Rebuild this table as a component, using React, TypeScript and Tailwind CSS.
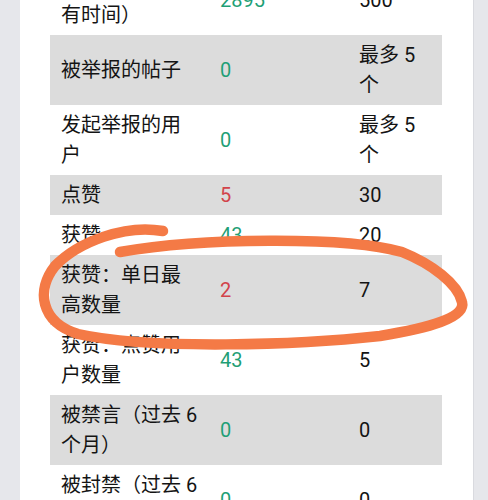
import React from "react";

type Row = { label: string; value: string; tone: "green" | "red"; req: string };

const rows: Row[] = [
  { label: "已读帖子（所有时间）", value: "2895", tone: "green", req: "500" },
  { label: "被举报的帖子", value: "0", tone: "green", req: "最多 5 个" },
  { label: "发起举报的用户", value: "0", tone: "green", req: "最多 5 个" },
  { label: "点赞", value: "5", tone: "red", req: "30" },
  { label: "获赞", value: "43", tone: "green", req: "20" },
  { label: "获赞：单日最高数量", value: "2", tone: "red", req: "7" },
  { label: "获赞：点赞用户数量", value: "43", tone: "green", req: "5" },
  { label: "被禁言（过去 6 个月）", value: "0", tone: "green", req: "0" },
  { label: "被封禁（过去 6 个月）", value: "0", tone: "green", req: "0" },
];

export default function App() {
  return (
    <div
      className="relative h-[500px] w-[488px] overflow-hidden bg-[#e6e7eb]"
      style={{ fontFamily: "Roboto, 'Noto Sans CJK SC', sans-serif" }}
    >
      <div className="ml-[20px] w-[454px] border-r border-[#d9dadf] bg-white pl-[30px] pr-[31px] -mt-[35px] pb-10">
        <table className="w-[392px] table-fixed border-collapse text-[20px] leading-[30px] text-[#141414]">
          <colgroup>
            <col className="w-[159px]" />
            <col className="w-[139px]" />
            <col className="w-[94px]" />
          </colgroup>
          <tbody>
            {rows.map((r, i) => (
              <tr key={i} className={i % 2 === 1 ? "bg-[#dcdcdc]" : "bg-white"}>
                <td className="px-[11px] py-[5px] align-middle">{r.label}</td>
                <td
                  className={
                    "px-[11px] py-[5px] align-middle " +
                    (r.tone === "green" ? "text-[#1f9f76]" : "text-[#d2434a]")
                  }
                >
                  {r.value}
                </td>
                <td className="px-[11px] py-[5px] align-middle">{r.req}</td>
              </tr>
            ))}
          </tbody>
        </table>
      </div>
      <svg
        className="pointer-events-none absolute left-0 top-0"
        width="488"
        height="500"
        viewBox="0 0 488 500"
      >
        <path
          d="M163,231 C125,224 78,242 55,266 C36,290 40,322 78,334 C150,350 300,345 380,336 C428,328 466,318 462,302 C458,284 432,264 402,252 C345,236 200,238 120,252"
          fill="none"
          stroke="#f47a46"
          strokeWidth="10.5"
          strokeLinecap="round"
          strokeLinejoin="round"
        />
      </svg>
    </div>
  );
}
